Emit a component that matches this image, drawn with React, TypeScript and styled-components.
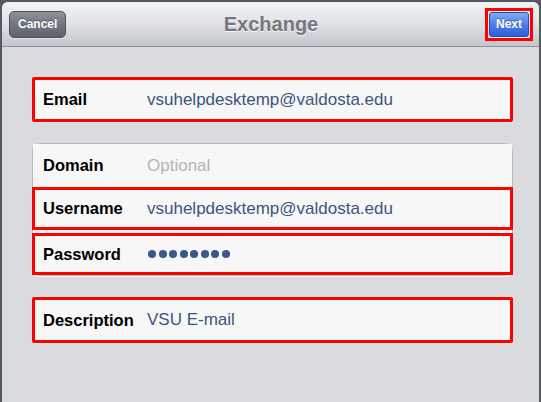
import React from 'react';
import styled, { createGlobalStyle } from 'styled-components';

const GlobalStyle = createGlobalStyle`
  html, body {
    margin: 0;
    padding: 0;
    overflow: hidden;
  }

  body {
    font-family: 'Liberation Sans', Arial, Helvetica, sans-serif;
  }
`;

const Screen = styled.div`
  display: flex;
  box-sizing: border-box;
  width: 541px;
  height: 402px;
  padding: 2px 2px 0 2px;
  background: #55585e;
`;

const Sheet = styled.div`
  display: flex;
  flex: 1;
  flex-direction: column;
  overflow: hidden;
  border-radius: 6px 6px 0 0;
  background: #d9dbdf;
`;

const NavBar = styled.header`
  display: grid;
  grid-template-columns: 1fr auto 1fr;
  align-items: center;
  height: 44px;
  padding: 0 6px 0 7px;
  border-bottom: 1px solid #8e9197;
  background: linear-gradient(#f2f3f5, #e1e3e7 45%, #c3c6cc);
`;

const Title = styled.h1`
  margin: 0;
  font-size: 20px;
  font-weight: bold;
  color: #737880;
  text-shadow: 0 1px 0 rgba(255, 255, 255, 0.8);
`;

const BarButton = styled.button<{ $primary?: boolean }>`
  height: ${(p) => (p.$primary ? '25px' : '27px')};
  padding: 0 ${(p) => (p.$primary ? '6px' : '8px')};
  border: 1px solid ${(p) => (p.$primary ? '#2a4f9c' : '#4d525a')};
  border-radius: ${(p) => (p.$primary ? '3px' : '5px')};
  background: ${(p) =>
    p.$primary
      ? 'linear-gradient(#84a9ef, #4b7fe6 50%, #2a61d8)'
      : 'linear-gradient(#8e939b, #717780 50%, #5d636c)'};
  color: #fff;
  font-family: inherit;
  font-size: 12px;
  font-weight: bold;
  text-shadow: 0 -1px 0 rgba(0, 0, 0, 0.35);
  box-shadow: 0 1px 0 rgba(255, 255, 255, 0.5);
`;

const LeftSlot = styled.div`
  display: flex;
  justify-content: flex-start;
`;

const RightSlot = styled.div`
  display: flex;
  justify-content: flex-end;
`;

const Marker = styled.div`
  display: flex;
  padding: 1px;
  border: 3px solid #ff0000;
`;

const Content = styled.main`
  display: flex;
  flex-direction: column;
  gap: 21px;
  padding: 30px 26px 0 30px;
`;

const Group = styled.section`
  display: flex;
  flex-direction: column;
  border: 1px solid #b6b9be;
  border-radius: 8px;
  background: #f7f7f7;
  box-shadow: 0 1px 0 rgba(255, 255, 255, 0.7);
`;

const Row = styled.div<{ $marked?: boolean; $height: number; $gap?: number }>`
  display: flex;
  align-items: center;
  box-sizing: border-box;
  height: ${(p) => p.$height}px;
  margin-top: ${(p) => p.$gap ?? 0}px;
  padding-left: ${(p) => (p.$marked ? 8 : 10)}px;
  border: ${(p) => (p.$marked ? '3px solid #ff0000' : 'none')};
  background: #f7f7f7;
`;

const SingleRow = styled(Row)`
  border-radius: 2px;
`;

const GroupRow = styled(Row)`
  margin-left: ${(p) => (p.$marked ? -1 : 0)}px;
  margin-right: ${(p) => (p.$marked ? -1 : 0)}px;
`;

const Label = styled.span`
  width: 104px;
  flex: none;
  font-size: 16.5px;
  font-weight: bold;
  color: #000;
`;

const Value = styled.span<{ $placeholder?: boolean }>`
  font-size: 17px;
  color: ${(p) => (p.$placeholder ? '#b3b3b3' : '#3a5584')};
`;

const Dots = styled.span`
  display: flex;
  gap: 2.5px;
  padding-left: 1px;
`;

const Dot = styled.span`
  width: 8px;
  height: 8px;
  border-radius: 50%;
  background: #3a5787;
`;

export default function App(): React.ReactElement {
  return (
    <>
      <GlobalStyle />
      <Screen>
        <Sheet>
          <NavBar>
            <LeftSlot>
              <BarButton>Cancel</BarButton>
            </LeftSlot>
            <Title>Exchange</Title>
            <RightSlot>
              <Marker>
                <BarButton $primary>Next</BarButton>
              </Marker>
            </RightSlot>
          </NavBar>
          <Content>
            <SingleRow $marked $height={45}>
              <Label>Email</Label>
              <Value>vsuhelpdesktemp@valdosta.edu</Value>
            </SingleRow>
            <Group>
              <GroupRow $height={43}>
                <Label>Domain</Label>
                <Value $placeholder>Optional</Value>
              </GroupRow>
              <GroupRow $marked $height={43}>
                <Label>Username</Label>
                <Value>vsuhelpdesktemp@valdosta.edu</Value>
              </GroupRow>
              <GroupRow $marked $height={42} $gap={3}>
                <Label>Password</Label>
                <Dots>
                  {Array.from({ length: 8 }, (_, i) => (
                    <Dot key={i} />
                  ))}
                </Dots>
              </GroupRow>
            </Group>
            <SingleRow $marked $height={46}>
              <Label>Description</Label>
              <Value>VSU E-mail</Value>
            </SingleRow>
          </Content>
        </Sheet>
      </Screen>
    </>
  );
}
